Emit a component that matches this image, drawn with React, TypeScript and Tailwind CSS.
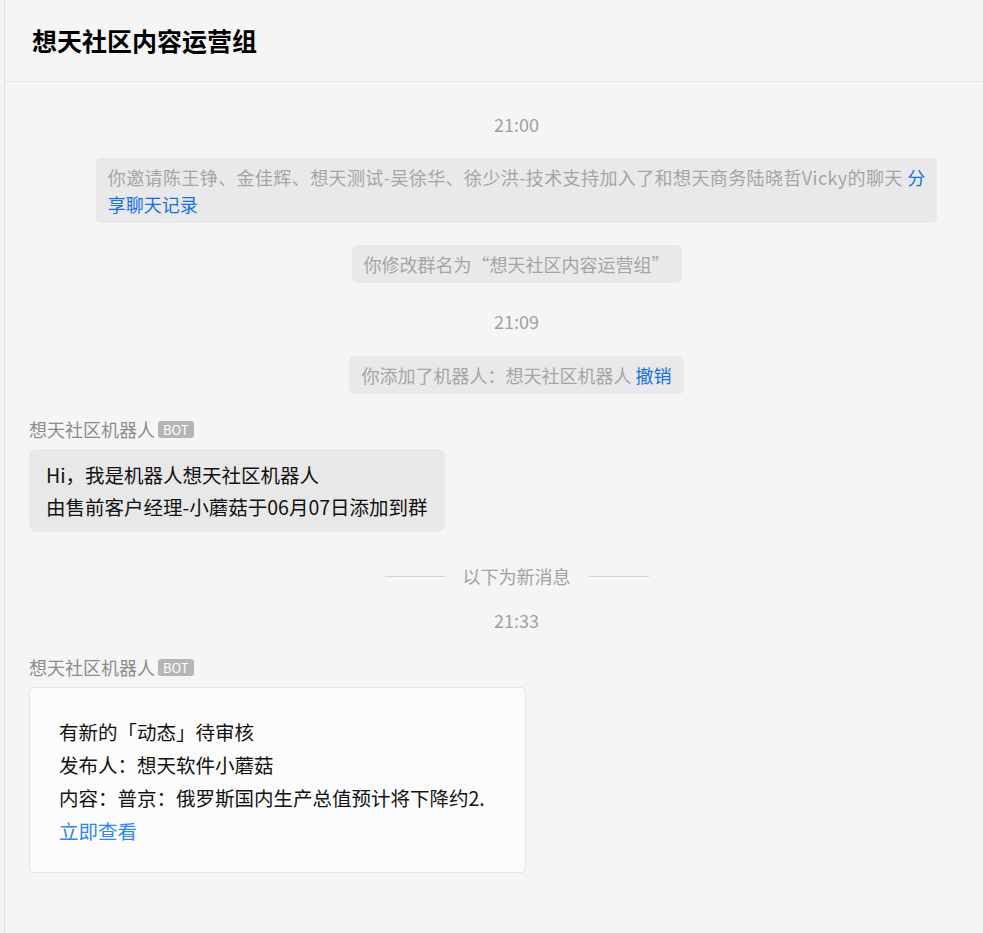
const font = { fontFamily: '"Noto Sans CJK SC", "Noto Sans", sans-serif' };

function Time({ t, className = '' }: { t: string; className?: string }) {
  return (
    <div className={`text-center text-[18px] leading-[27px] text-[#9fa1a8] ${className}`}>{t}</div>
  );
}

function SysMsg({ children, className = '' }: { children: React.ReactNode; className?: string }) {
  return (
    <div className={`flex justify-center ${className}`}>
      <div className="max-w-[842px] rounded-[5px] bg-[#e9e9eb] px-[12px] py-[5.5px] text-[18px] leading-[27px] text-[#a5a5a5]">
        {children}
      </div>
    </div>
  );
}

function Sender({ className = '' }: { className?: string }) {
  return (
    <div className={`flex items-center gap-[3px] text-[18px] leading-[27px] text-[#8c8c8c] ${className}`}>
      <span>想天社区机器人</span>
      <span className="rounded-[3px] bg-[#b5b5b5] px-[5px] text-[13px] leading-[17px] text-white">BOT</span>
    </div>
  );
}

export default function App() {
  return (
    <div className="h-[933px] w-full overflow-hidden bg-[#f5f5f5]" style={font}>
      <div className="ml-[4px] flex h-full flex-col border-l border-[#e0e0e0]">
        {/* Header */}
        <header className="flex h-[82px] shrink-0 items-center border-b border-[#e6e6e6] pl-[27px]">
          <h1 className="text-[25px] font-bold text-black">想天社区内容运营组</h1>
        </header>

        {/* Message list */}
        <main className="w-[1023px] shrink-0 px-[24px] pt-[28.5px]">
          <Time t="21:00" />
          <SysMsg className="mt-[20.5px]">
            <span className="tracking-[0.4px]">
              你邀请陈王铮、金佳辉、想天测试-吴徐华、徐少洪-技术支持加入了和想天商务陆晓哲Vicky的聊天{' '}
            </span>
            <span className="text-[#1470e6]">
              分<br />享聊天记录
            </span>
          </SysMsg>
          <SysMsg className="mt-[22px]">你修改群名为“想天社区内容运营组”</SysMsg>
          <Time t="21:09" className="mt-[24.5px]" />
          <SysMsg className="mt-[21.5px]">
            你添加了机器人：想天社区机器人 <span className="text-[#1470e6]">撤销</span>
          </SysMsg>

          <Sender className="mt-[21.5px]" />
          <div className="mt-[6.5px] w-fit rounded-[8px] bg-[#e8e8e8] px-[17px] py-[9.5px] text-[19.5px] leading-[32px] text-[#111]">
            <div>Hi，我是机器人想天社区机器人</div>
            <div>由售前客户经理-小蘑菇于06月07日添加到群</div>
          </div>

          {/* New-message divider */}
          <div className="mt-[30.5px] flex items-center justify-center gap-[18px]">
            <div className="h-px w-[60px] bg-[#d2d2d2]" />
            <span className="text-[18px] leading-[27px] text-[#9fa1a8]">以下为新消息</span>
            <div className="h-px w-[60px] bg-[#d2d2d2]" />
          </div>
          <Time t="21:33" className="mt-[17px]" />

          <Sender className="mt-[20px]" />
          <div className="mt-[6.5px] w-[497px] rounded-[5px] border border-[#e5e5e5] bg-[#fcfcfc] pb-[25px] pl-[29px] pt-[26.5px] text-[19.5px] leading-[33px] text-[#111]">
            <div>有新的「动态」待审核</div>
            <div>发布人：想天软件小蘑菇</div>
            <div>内容：普京：俄罗斯国内生产总值预计将下降约2.</div>
            <div className="text-[#2f86f0]">立即查看</div>
          </div>
        </main>
      </div>
    </div>
  );
}
